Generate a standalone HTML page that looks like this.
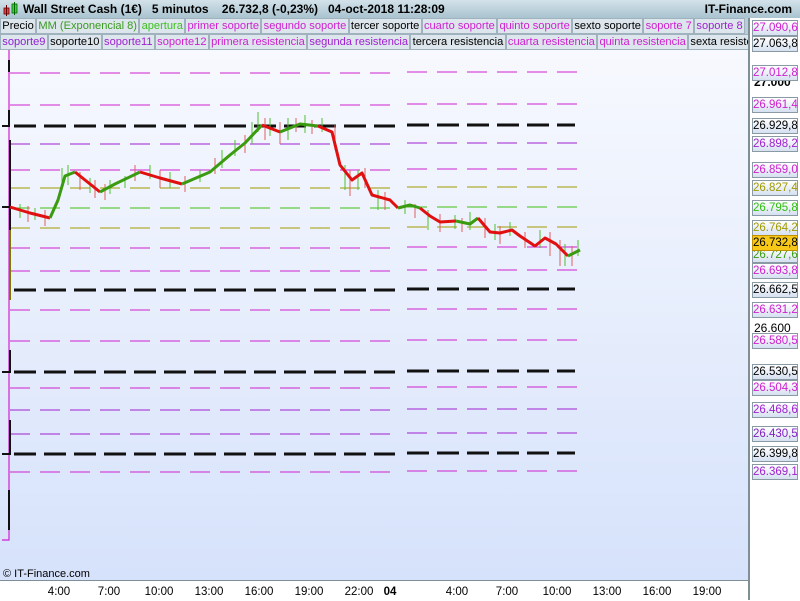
<!DOCTYPE html>
<html><head><meta charset="utf-8"><style>
body{margin:0;width:800px;height:600px;overflow:hidden;font-family:"Liberation Sans",sans-serif;background:#fff;position:relative}
#hdr{position:absolute;left:0;top:0;width:800px;height:18px;background:linear-gradient(#d3e2ea,#a9c3cf);font-weight:bold;font-size:12px;line-height:18px}
.row{position:absolute;left:0;height:16px;width:748px;background:#b9cdd8;font-size:11.1px;line-height:15px;white-space:nowrap;overflow:hidden}
.row span{display:inline-block;background:#dde6ec;border:1px solid #9fb2bd;padding:0 1.3px;margin-right:0;height:14px}
#plot{position:absolute;left:0;top:50px;width:748px;height:530px;background:linear-gradient(#f7f9fe,#d6e2fb)}
#ax{position:absolute;left:748px;top:18px;width:52px;height:582px;background:#fff;border-left:2px solid #7f8f98}
.lb{position:absolute;left:752px;width:44px;height:14px;border:1px solid #8a9aa4;background:linear-gradient(#fff,#d6e0f0);font-size:11.5px;line-height:14px;text-align:center}
#tax{position:absolute;left:0;top:580px;width:748px;height:20px;border-top:1px solid #7f8f98;background:#fff;font-size:11.5px}
#tax span{position:absolute;top:5px;transform:translateX(-50%)}
</style></head><body>
<div id="hdr"><svg style="position:absolute;left:3px;top:2px" width="16" height="15"><rect x="1" y="6" width="5" height="6" fill="#e04848" stroke="#600" stroke-width="0.8"/><line x1="3.5" y1="3" x2="3.5" y2="14" stroke="#600"/><rect x="9" y="2" width="5" height="9" fill="#40d040" stroke="#060" stroke-width="0.8"/><line x1="11.5" y1="0" x2="11.5" y2="13" stroke="#060"/></svg><span style="position:absolute;left:23px">Wall Street Cash (1€)&nbsp;&nbsp;&nbsp;5 minutos&nbsp;&nbsp;&nbsp;&nbsp;26.732,8 (-0,23%)&nbsp;&nbsp;&nbsp;04-oct-2018 11:28:09</span><span style="position:absolute;right:8px">IT-Finance.com</span></div>
<div class="row" style="top:18px"><span>Precio</span><span style="color:#3a9a20">MM (Exponencial 8)</span><span style="color:#3cc020">apertura</span><span style="color:#d020d0">primer soporte</span><span style="color:#d020d0">segundo soporte</span><span>tercer soporte</span><span style="color:#d020d0">cuarto soporte</span><span style="color:#d020d0">quinto soporte</span><span>sexto soporte</span><span style="color:#d020d0">soporte 7</span><span style="color:#a020d0">soporte 8</span></div>
<div class="row" style="top:34px"><span style="color:#9020d0">soporte9</span><span>soporte10</span><span style="color:#a020d0">soporte11</span><span style="color:#d020d0">soporte12</span><span style="color:#d020d0">primera resistencia</span><span style="color:#a020d0">segunda resistencia</span><span>tercera resistencia</span><span style="color:#d020d0">cuarta resistencia</span><span style="color:#d020d0">quinta resistencia</span><span>sexta resistencia</span></div>
<div id="plot"></div>
<svg style="position:absolute;left:0;top:0" width="748" height="580">
<g fill="none">
<g stroke-width="1" stroke-dasharray="20,10">
<path d="M10 73H395M407 72H580" stroke="#d020d0"/>
<path d="M10 105H395M407 104H580" stroke="#d020d0"/>
<path d="M10 144H395M407 143H580" stroke="#a020d0"/>
<path d="M10 170H395M407 169H580" stroke="#d020d0"/>
<path d="M10 188H395M407 187H580" stroke="#a09a00"/>
<path d="M10 208H395M407 207H580" stroke="#40c010"/>
<path d="M10 228H395M407 227H580" stroke="#a09a00"/>
<path d="M10 248H395M407 247H580" stroke="#d020d0"/>
<path d="M10 271H395M407 270H580" stroke="#d020d0"/>
<path d="M10 310H395M407 309H580" stroke="#d020d0"/>
<path d="M10 341H395M407 340H580" stroke="#d020d0"/>
<path d="M10 388H395M407 387H580" stroke="#d020d0"/>
<path d="M10 410H395M407 409H580" stroke="#a020d0"/>
<path d="M10 434H395M407 433H580" stroke="#a020d0"/>
<path d="M10 472H395M407 471H580" stroke="#d020d0"/>
</g>
<g stroke="#111" stroke-width="3" stroke-dasharray="22,8">
<path d="M14 126H395M407 125H575"/>
<path d="M14 290H395M407 289H575"/>
<path d="M14 372H395M407 371H575"/>
<path d="M14 454H395M407 453H575"/>
</g>
<path d="M9 50V540H2" stroke="#d020d0" stroke-width="1.2"/>
<path d="M9 60V72M9 110V126H2M10 140V300M10 350V372H2M10 420V454H2M9 490V530" stroke="#111" stroke-width="2"/>
<path d="M9 207H2" stroke="#111" stroke-width="2"/>
<path d="M10 230V300" stroke="#a09a00" stroke-width="1.5"/>
<g stroke-width="1" stroke="#50c030">
<path d="M20 204v14M35 208v12M62 168v22M68 165v20M90 178v15M110 180v14M125 176v12M150 165v14M170 172v16M200 170v12M222 150v18M235 140v16M252 122v22M258 112v20M270 118v18M288 118v22M305 115v18M322 118v14M345 165v25M358 170v20M378 190v20M405 200v14M428 210v20M455 215v14M470 212v18M495 224v16M510 222v14M540 230v18M565 244v22M578 240v16"/>
</g>
<g stroke-width="1" stroke="#e06060">
<path d="M28 206v16M45 210v16M80 172v18M95 180v18M105 184v16M135 165v16M160 170v18M185 176v16M215 158v16M245 135v18M265 118v22M280 122v22M296 118v14M312 120v14M335 125v25M350 170v26M365 168v20M385 192v18M415 204v14M440 214v18M462 218v14M485 218v20M500 226v18M525 232v16M550 232v24M560 240v26M572 246v20"/>
</g>
<g stroke-width="3" stroke-linejoin="round">
<path d="M10 207L30 213L50 218" stroke="#e01010"/>
<path d="M50 218L58 200L65 176L75 172" stroke="#3a9a10"/>
<path d="M75 172L85 180L100 192" stroke="#e01010"/>
<path d="M100 192L115 184L140 172" stroke="#3a9a10"/>
<path d="M140 172L160 178L182 184" stroke="#e01010"/>
<path d="M182 184L210 172L230 155L245 143L262 125" stroke="#3a9a10"/>
<path d="M262 125L280 132" stroke="#e01010"/>
<path d="M280 132L300 124L318 126" stroke="#3a9a10"/>
<path d="M318 126L332 132L340 165L352 180L362 173L372 195L390 200L398 208" stroke="#e01010"/>
<path d="M398 208L410 205L420 208" stroke="#3a9a10"/>
<path d="M420 208L430 216L440 222L456 221" stroke="#e01010"/>
<path d="M456 221L470 224L478 218" stroke="#3a9a10"/>
<path d="M478 218L490 232L500 233L512 230L520 236L535 246L545 238L556 244L568 256" stroke="#e01010"/>
<path d="M568 256L580 250" stroke="#3a9a10"/>
</g>
</g>
</svg>
<div id="ax"></div>
<div class="lb" style="top:20px;color:#d020d0">27.090,6</div>
<div class="lb" style="top:36px">27.063,8</div>
<div style="position:absolute;left:754px;top:75px;font-size:12px;font-weight:bold">27.000</div>
<div class="lb" style="top:65px;color:#d020d0">27.012,8</div>
<div class="lb" style="top:97px;color:#d020d0">26.961,4</div>
<div class="lb" style="top:118px">26.929,8</div>
<div class="lb" style="top:136px;color:#a020d0">26.898,2</div>
<div class="lb" style="top:162px;color:#d020d0">26.859,0</div>
<div class="lb" style="top:180px;color:#a09a00">26.827,4</div>
<div class="lb" style="top:200px;color:#30c010">26.795,8</div>
<div class="lb" style="top:220px;color:#a09a00">26.764,2</div>
<div class="lb" style="top:247px;color:#3a9a10">26.727,6</div>
<div class="lb" style="top:235px;background:#f8c818;border-color:#c09000">26.732,8</div>
<div class="lb" style="top:263px;color:#d020d0">26.693,8</div>
<div class="lb" style="top:282px">26.662,5</div>
<div class="lb" style="top:302px;color:#d020d0">26.631,2</div>
<div style="position:absolute;left:754px;top:321px;font-size:12px">26.600</div>
<div class="lb" style="top:333px;color:#d020d0">26.580,5</div>
<div class="lb" style="top:364px">26.530,5</div>
<div class="lb" style="top:380px;color:#d020d0">26.504,3</div>
<div class="lb" style="top:402px;color:#a020d0">26.468,6</div>
<div class="lb" style="top:426px;color:#8020c0">26.430,5</div>
<div class="lb" style="top:446px">26.399,8</div>
<div class="lb" style="top:464px;color:#a020d0">26.369,1</div>
<div style="position:absolute;left:3px;top:568px;font-size:11px">© IT-Finance.com</div>
<div id="tax"><span style="left:59px">4:00</span><span style="left:109px">7:00</span><span style="left:159px">10:00</span><span style="left:209px">13:00</span><span style="left:259px">16:00</span><span style="left:309px">19:00</span><span style="left:359px">22:00</span><span style="left:390px;font-weight:bold">04</span><span style="left:457px">4:00</span><span style="left:507px">7:00</span><span style="left:557px">10:00</span><span style="left:607px">13:00</span><span style="left:657px">16:00</span><span style="left:707px">19:00</span></div>
</body></html>
